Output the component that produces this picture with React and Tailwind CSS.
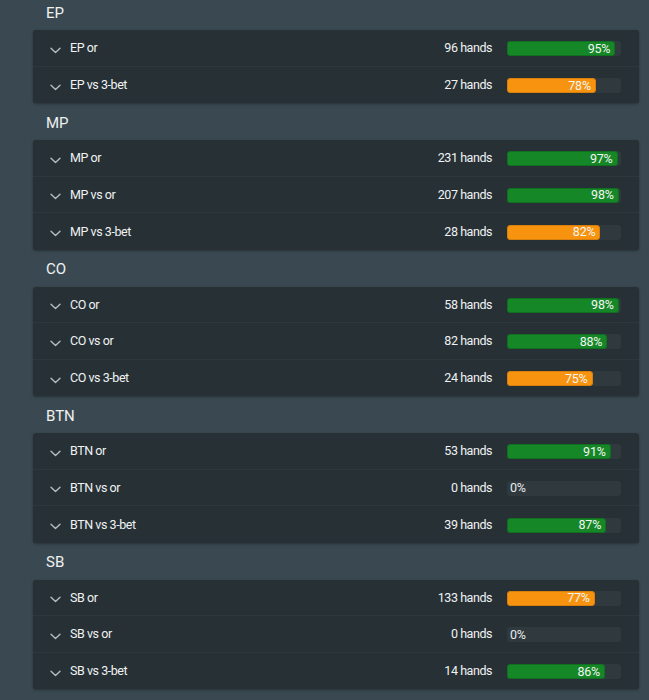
import React from "react";

const data = [
  { pos: "EP", rows: [["EP or", 96, 95], ["EP vs 3-bet", 27, 78]] },
  { pos: "MP", rows: [["MP or", 231, 97], ["MP vs or", 207, 98], ["MP vs 3-bet", 28, 82]] },
  { pos: "CO", rows: [["CO or", 58, 98], ["CO vs or", 82, 88], ["CO vs 3-bet", 24, 75]] },
  { pos: "BTN", rows: [["BTN or", 53, 91], ["BTN vs or", 0, 0], ["BTN vs 3-bet", 39, 87]] },
  { pos: "SB", rows: [["SB or", 133, 77], ["SB vs or", 0, 0], ["SB vs 3-bet", 14, 86]] },
];

function Chevron() {
  return (
    <svg width="11" height="7" viewBox="0 0 11 7" className="mt-[3px] shrink-0">
      <path d="M1 1.2 L5.5 5.6 L10 1.2" fill="none" stroke="#b4bcc0" strokeWidth="1.4" strokeLinecap="round" strokeLinejoin="round" />
    </svg>
  );
}

function Bar({ pct }) {
  const orange = pct > 0 && pct < 85;
  return (
    <div className="relative w-[114px] h-[15px] rounded-[3px] bg-[#2f393e]">
      {pct > 0 ? (
        <div
          className={
            "h-full rounded-[3px] flex items-center justify-end pr-[4px] text-[12.5px] tracking-[-0.2px] leading-none text-[#f2f5f2] border " +
            (orange ? "bg-[#f7930f] border-[#d9800c]" : "bg-[#158727] border-[#117020]")
          }
          style={{ width: `${pct}%` }}
        >
          {pct}%
        </div>
      ) : (
        <div className="absolute inset-0 flex items-center pl-[3px] text-[12.5px] tracking-[-0.2px] leading-none text-[#e8ecee]">0%</div>
      )}
    </div>
  );
}

export default function App() {
  return (
    <div
      className="w-[649px] h-[700px] overflow-hidden bg-[#3a4951] text-[#e9edef]"
      style={{ fontFamily: "Roboto, 'Liberation Sans', sans-serif" }}
    >
      <div className="-mt-[7px] pl-[33px] pr-[10px]">
        {data.map((sec) => (
          <div key={sec.pos}>
            <div className="h-[37px] flex items-center pt-[3px] pl-[13px] text-[15px] text-[#eef1f2]">{sec.pos}</div>
            <div className="bg-[#263035] rounded-[3px] shadow-[0_1px_3px_rgba(0,0,0,0.35)] divide-y divide-[#2d373c]">
              {sec.rows.map(([label, hands, pct]) => (
                <div key={label} className="h-[36.5px] flex items-center pt-[2px] pl-[17px] pr-[18px]">
                  <Chevron />
                  <div className="ml-[9px] text-[12.5px] tracking-[-0.45px] text-[#f0f2f3] flex-1">{label}</div>
                  <div className="text-[12.5px] tracking-[-0.45px] text-[#f0f2f3] mr-[15px]">{hands} hands</div>
                  <Bar pct={pct} />
                </div>
              ))}
            </div>
          </div>
        ))}
      </div>
    </div>
  );
}
